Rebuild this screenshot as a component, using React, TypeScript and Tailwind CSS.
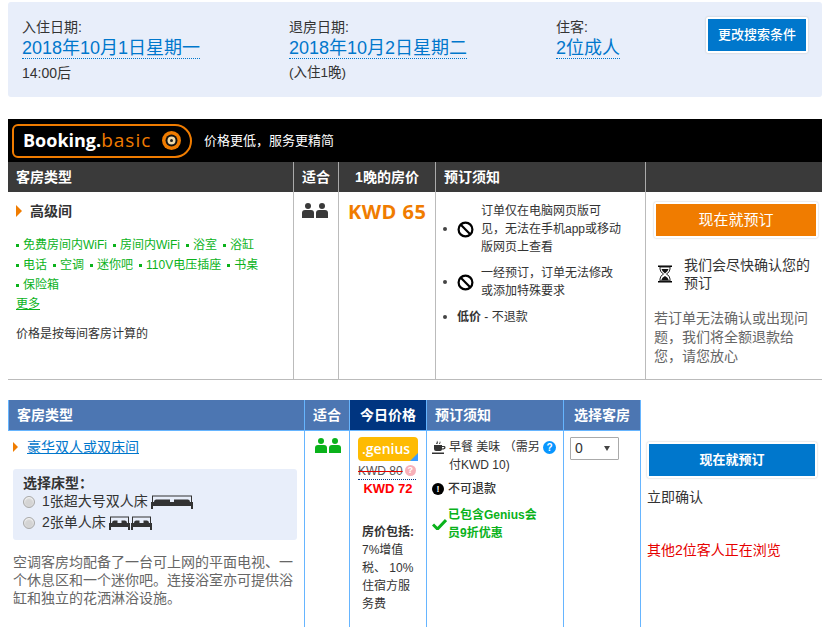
const cjk = "font-['Liberation_Sans','Noto_Sans_CJK_SC',sans-serif]";

function People({ color }: { color: string }) {
  return (
    <svg width="27" height="15" viewBox="0 0 27 15" fill={color}>
      <circle cx="7" cy="3" r="3" />
      <path d="M1 15V10Q1 7 4 7H10Q13 7 13 10V15Z" />
      <circle cx="21" cy="3" r="3" />
      <path d="M15 15V10Q15 7 18 7H24Q27 7 27 10V15Z" />
    </svg>
  );
}

function NoSign() {
  return (
    <svg width="17" height="17" viewBox="0 0 17 17" fill="none" stroke="#000" strokeWidth="2.2" className="shrink-0">
      <circle cx="8.5" cy="8.5" r="6.9" />
      <path d="M3.8 3.8L13.2 13.2" />
    </svg>
  );
}

function Hourglass() {
  return (
    <svg width="14" height="18" viewBox="0 0 14 18" className="shrink-0">
      <path d="M0 0.5H14V2H0ZM0 16H14V17.5H0Z" fill="#000" />
      <path d="M2 2H12V4Q12 7 8.5 9Q12 11 12 14V16H2V14Q2 11 5.5 9Q2 7 2 4Z" fill="#fff" stroke="#222" strokeWidth="1" />
      <path d="M3.5 4H10.5Q10 6.5 7 8.5Q4 6.5 3.5 4ZM3 15.5Q4 12 7 11Q10 12 11 15.5Z" fill="#111" />
    </svg>
  );
}

function Bed({ width }: { width: number }) {
  const mid = width / 2;
  return (
    <svg width={width} height="14" viewBox={`0 0 ${width} 14`} fill="#333" className="inline-block">
      <path d={`M1 7V0.5H${width - 1}V7H${width - 2}V1.5H2V7Z`} />
      <path d={`M3 7Q3 4.5 5 4.5H${mid - 2}V7ZM${mid + 2} 7V4.5H${width - 5}Q${width - 3} 4.5 ${width - 3} 7Z`} />
      <path d={`M0 7H${width}V14H${width - 2}V11H2V14H0Z`} />
    </svg>
  );
}

function CupIcon() {
  return (
    <svg width="14" height="14" viewBox="0 0 14 14" fill="#333" className="shrink-0">
      <path d="M5 0.5Q6.5 2 5.5 4H4Q5 2 5 0.5ZM8 1Q9 2.5 8 4H7Q7.8 2.5 8 1Z" />
      <path d="M2 5H10V6H12.5Q13.5 6 13.5 7.5Q13.5 9.5 10 9.5Q9.5 11 8 11H4Q2 11 2 9ZM10 7V8.5Q12.3 8.3 12.3 7.5Q12.3 7 12 7Z" />
      <path d="M0 12.5H12V14H0Z" />
    </svg>
  );
}

function BasicMark() {
  return (
    <svg width="19" height="19" viewBox="0 0 19 19">
      <circle cx="9.5" cy="9.5" r="9.5" fill="#f07c00" />
      <circle cx="9.5" cy="9.5" r="6" fill="#111" />
      <circle cx="9.5" cy="9.5" r="4" fill="#f0d9a8" />
      <circle cx="9.5" cy="9.5" r="1.5" fill="#222" />
    </svg>
  );
}

function Radio() {
  return <span className="w-3 h-3 rounded-full bg-[#d4d4d4] border border-[#aaa] shrink-0 shadow-[inset_0_1px_2px_#fff]" />;
}

function Amenity({ children }: { children: string }) {
  return (
    <span className="flex items-center gap-[4px] mr-[6px]">
      <span className="w-[3px] h-[3px] bg-[#0ab21b]" />
      {children}
    </span>
  );
}

function Head({ children, className = "" }: { children?: string; className?: string }) {
  return <div className={`flex items-center text-[14px] font-bold text-white ${className}`}>{children}</div>;
}

export default function App() {
  return (
    <div className={`${cjk} w-[826px] h-[627px] overflow-hidden bg-white pt-[2px] pl-2 text-[#333] text-[13px]`}>
      {/* search summary */}
      <div className="w-[814px] h-[95px] bg-[#e8eefa] rounded-[3px] flex relative pl-[14px] pt-[15px]">
        <div className="w-[267px]">
          <div className="text-[14px] leading-[20px]">入住日期:</div>
          <a className="text-[18px] leading-[23px] text-[#0077cc] border-b border-dotted border-[#0077cc] inline-block h-[22px] align-top">2018年10月1日星期一</a>
          <div className="text-[14px] leading-[18px] mt-[5px]">14:00后</div>
        </div>
        <div className="w-[267px]">
          <div className="text-[14px] leading-[20px]">退房日期:</div>
          <a className="text-[18px] leading-[23px] text-[#0077cc] border-b border-dotted border-[#0077cc] inline-block h-[22px] align-top">2018年10月2日星期二</a>
          <div className="text-[13.5px] leading-[18px] mt-[5px]">(入住1晚)</div>
        </div>
        <div className="w-[150px]">
          <div className="text-[14px] leading-[20px]">住客:</div>
          <a className="text-[18px] leading-[23px] text-[#0077cc] border-b border-dotted border-[#0077cc] inline-block h-[22px] align-top">2位成人</a>
        </div>
        <button className="absolute left-[698px] top-[15px] w-[102px] h-[36px] bg-[#0077cc] border-2 border-white rounded-[2px] shadow-[0_0_2px_#bbb] text-white text-[13px] font-medium">更改搜索条件</button>
      </div>

      {/* basic banner */}
      <div className="mt-[22px] w-[814px] h-[43px] bg-black flex items-center pl-1 text-white text-[13px]">
        <div className="w-[180px] h-[34px] border-2 border-[#f07c00] rounded-l-[6px] rounded-r-[17px] flex items-center pl-[9px] mr-[12px]">
          <span className="font-['Open_Sans',sans-serif] font-bold text-[18px] text-white">Booking.</span>
          <span className="font-['Open_Sans',sans-serif] text-[19px] tracking-[1px] text-[#f07c00]">basic</span>
          <span className="ml-[11px] flex"><BasicMark /></span>
        </div>
        价格更低，服务更精简
      </div>

      {/* basic table */}
      <div className="w-[814px] grid grid-cols-[285px_45px_97px_210px_177px] grid-rows-[30px_1fr] border-b border-[#bbb] h-[218px]">
        <Head className="bg-[#3a3a3a] pl-2">客房类型</Head>
        <Head className="bg-[#3a3a3a] border-l border-[#aaa] justify-center">适合</Head>
        <Head className="bg-[#3a3a3a] border-l border-[#aaa] justify-center">1晚的房价</Head>
        <Head className="bg-[#3a3a3a] border-l border-[#aaa] pl-2">预订须知</Head>
        <Head className="bg-[#3a3a3a] border-l border-[#aaa]" />

        <div className="pl-2 pt-[10px]">
          <div className="flex items-center font-bold text-[14px] leading-[18px]">
            <span className="w-0 h-0 border-y-[6px] border-y-transparent border-l-[6px] border-l-[#f07c00] mr-[8px]" />
            高级间
          </div>
          <div className="mt-[15px] flex flex-wrap text-[12px] leading-[20px] text-[#0ab21b] w-[270px]">
            <Amenity>免费房间内WiFi</Amenity>
            <Amenity>房间内WiFi</Amenity>
            <Amenity>浴室</Amenity>
            <Amenity>浴缸</Amenity>
            <Amenity>电话</Amenity>
            <Amenity>空调</Amenity>
            <Amenity>迷你吧</Amenity>
            <Amenity>110V电压插座</Amenity>
            <Amenity>书桌</Amenity>
            <Amenity>保险箱</Amenity>
          </div>
          <a className="block mt-[1px] text-[12px] leading-[16px] text-[#0ab21b] underline">更多</a>
          <div className="mt-[13px] text-[12px] leading-[18px]">价格是按每间客房计算的</div>
        </div>
        <div className="border-l border-[#bbb] pt-[11px] pl-[7px]">
          <People color="#3a3a3a" />
        </div>
        <div className="border-l border-[#bbb] pt-[8px] pl-[9px] text-[#f07c00] font-bold text-[20px] tracking-[0.5px] leading-[24px] font-['Open_Sans',sans-serif]">KWD 65</div>
        <div className="border-l border-[#bbb] pl-[7px] pt-[10px] text-[12px] leading-[18px]">
          <div className="flex items-center">
            <span className="w-1 h-1 rounded-full bg-[#444] mr-[10px] shrink-0" />
            <NoSign />
            <span className="ml-[7px] w-[142px]">订单仅在电脑网页版可见，无法在手机app或移动版网页上查看</span>
          </div>
          <div className="flex items-center mt-[8px]">
            <span className="w-1 h-1 rounded-full bg-[#444] mr-[10px] shrink-0" />
            <NoSign />
            <span className="ml-[7px] w-[135px]">一经预订，订单无法修改或添加特殊要求</span>
          </div>
          <div className="flex items-center mt-[8px]">
            <span className="w-1 h-1 rounded-full bg-[#444] mr-[10px] shrink-0" />
            <span><b>低价</b> - 不退款</span>
          </div>
        </div>
        <div className="border-l border-[#bbb] pl-2 pt-[10px]">
          <button className="w-[164px] h-[36px] bg-[#f07c00] border-2 border-white rounded-[2px] shadow-[0_0_2px_#bbb] text-white text-[15px]">现在就预订</button>
          <div className="flex items-center mt-[18px] text-[14px] leading-[18px]">
            <span className="ml-[4px] mr-[12px] flex"><Hourglass /></span>
            <span className="w-[128px]">我们会尽快确认您的预订</span>
          </div>
          <div className="mt-[17px] text-[14px] leading-[19px] text-[#666] w-[160px]">
            若订单无法确认或出现问题，我们将全额退款给
            <br />
            您，请您放心
          </div>
        </div>
      </div>

      {/* regular table */}
      <div className="mt-[20px] flex">
        <div className="grid grid-cols-[296px_45px_77px_137px_77px] w-[633px] border-r border-[#66b5ff] h-[227px] grid-rows-[31px_196px]">
          <Head className="bg-[#4c76b2] pl-2 border-l border-[#66b5ff] border-b">客房类型</Head>
          <Head className="bg-[#4c76b2] border-l border-b border-[#66b5ff] justify-center">适合</Head>
          <Head className="bg-[#003580] border-l border-b border-[#66b5ff] justify-center">今日价格</Head>
          <Head className="bg-[#4c76b2] border-l border-b border-[#66b5ff] pl-2">预订须知</Head>
          <Head className="bg-[#4c76b2] border-l border-b border-[#66b5ff] justify-center">选择客房</Head>

          <div className="pl-[5px] pr-[7px] pt-[7px]">
            <div className="flex items-center text-[14px] leading-[18px]">
              <span className="w-0 h-0 border-y-[5px] border-y-transparent border-l-[5px] border-l-[#f07c00] mr-[9px]" />
              <a className="text-[#0077cc] underline">豪华双人或双床间</a>
            </div>
            <div className="mt-[13px] bg-[#e8eefa] rounded-[3px] h-[71px] pl-[10px] pt-[6px] text-[14px]">
              <div className="font-bold leading-[16px]">选择床型：</div>
              <div className="flex items-center h-[21px]">
                <Radio />
                <span className="ml-[7px] mr-[3px]">1张超大号双人床</span>
                <Bed width={42} />
              </div>
              <div className="flex items-center h-[21px]">
                <Radio />
                <span className="ml-[7px] mr-[3px]">2张单人床</span>
                <span className="flex gap-[1px]"><Bed width={21} /><Bed width={21} /></span>
              </div>
            </div>
            <div className="mt-[13px] text-[14px] leading-[18px] text-[#666]">空调客房均配备了一台可上网的平面电视、一个休息区和一个迷你吧。连接浴室亦可提供浴缸和独立的花洒淋浴设施。</div>
          </div>
          <div className="border-l border-[#66b5ff] pt-[7px] pl-[9px]">
            <People color="#0ab21b" />
          </div>
          <div className="border-l border-[#66b5ff] pl-[8px] pr-[4px] pt-[6px] text-[12px] leading-[18px]">
            <div className="relative w-[60px] h-[24px] bg-[#febb02] rounded-[4px] text-white font-semibold text-[14px] leading-[23px] pl-1 font-['Open_Sans',sans-serif]">
              .genius
              <span className="absolute right-0 bottom-0 w-0 h-0 border-l-[8px] border-l-transparent border-b-[8px] border-b-[#3b9dff]" />
            </div>
            <div className="relative h-[18px] flex items-center gap-[2px] border-b border-dotted border-[#003580] w-[58px] mt-[1px]">
              <span className="line-through decoration-[#e60000] text-[#555] text-[12px] leading-[14px]">KWD 80</span>
              <span className="w-[11px] h-[11px] rounded-full bg-[#f8b0b8] text-white text-[9px] leading-[11px] text-center font-bold">?</span>
            </div>
            <div className="text-[#ff0000] font-bold text-[13px] leading-[18px] text-center w-[60px]">KWD 72</div>
            <div className="mt-[25px] pl-1 w-[60px] whitespace-nowrap font-bold">房价包括:</div>
            <div className="pl-1 w-[56px]">7%增值税、 10%住宿方服务费</div>
          </div>
          <div className="border-l border-[#66b5ff] pl-[5px] pt-[7px] text-[12px] leading-[18px]">
            <div className="flex items-start">
              <span className="mr-[3px] mt-[2px] flex"><CupIcon /></span>
              <span className="w-[94px]">早餐 美味 （需另付KWD 10)</span>
              <span className="w-[13px] h-[13px] mt-[3px] rounded-full bg-[#0896ff] text-white text-[10px] leading-[13px] text-center font-bold shrink-0">?</span>
            </div>
            <div className="flex items-center mt-[6px]">
              <span className="w-[12px] h-[12px] mr-[4px] rounded-full bg-black text-white text-[9px] leading-[12px] text-center font-bold">!</span>
              <span className="font-medium">不可退款</span>
            </div>
            <div className="flex items-center mt-[8px] text-[#0ab21b] font-bold">
              <svg width="15" height="12" viewBox="0 0 15 12" className="shrink-0 mr-[1px]">
                <path d="M1 6.5L5.5 11L14 2" fill="none" stroke="#0ab21b" strokeWidth="3" />
              </svg>
              <span className="w-[90px]">已包含Genius会员9折优惠</span>
            </div>
          </div>
          <div className="border-l border-[#66b5ff] pl-[6px] pt-[6px]">
            <div className="w-[49px] h-[23px] border border-[#aaa] rounded-[1px] flex items-center justify-between pl-1 pr-2 text-[14px]">
              0
              <span className="w-0 h-0 border-x-[3px] border-x-transparent border-t-[5px] border-t-[#444]" />
            </div>
          </div>
        </div>

        <div className="pl-[6px] pt-[42px] w-[181px]">
          <button className="w-[170px] h-[36px] bg-[#0077cc] border-2 border-white rounded-[2px] shadow-[0_0_2px_#bbb] text-white text-[13px] font-bold">现在就预订</button>
          <div className="mt-[10px] text-[14px] leading-[18px]">立即确认</div>
          <div className="mt-[35px] text-[14px] leading-[18px] text-[#e60000]">其他2位客人正在浏览</div>
        </div>
      </div>
    </div>
  );
}
